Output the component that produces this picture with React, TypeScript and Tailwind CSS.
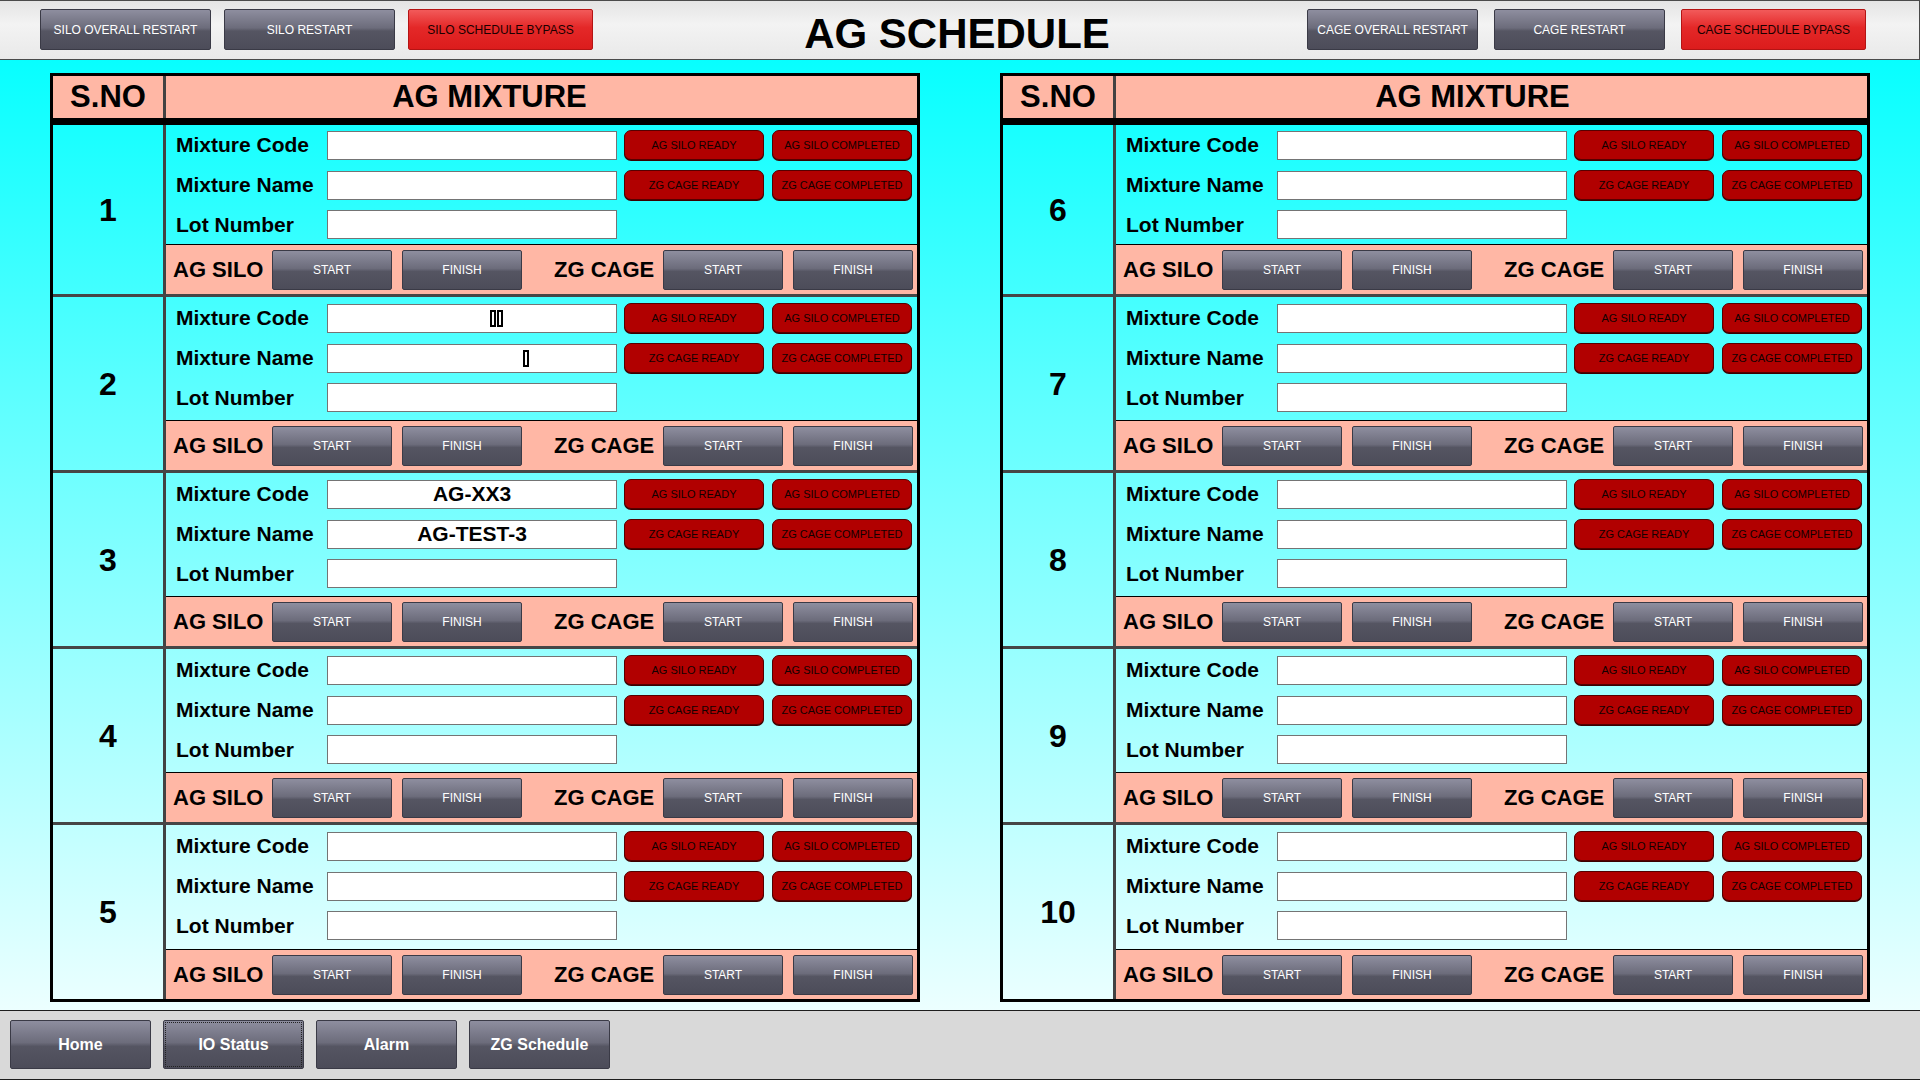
import React from 'react';

type Entry = { code?: string; name?: string; codeTofu?: number; nameTofu?: number };

const GRAY_BTN =
  'border border-[#3a3a46] bg-[linear-gradient(to_bottom,#8e8e9f_0%,#6c6c7b_46%,#555562_54%,#4c4c59_100%)] text-white';

const LEFT_ROWS: Entry[] = [{}, { codeTofu: 2, nameTofu: 1 }, { code: 'AG-XX3', name: 'AG-TEST-3' }, {}, {}];
const RIGHT_ROWS: Entry[] = [{}, {}, {}, {}, {}];

/** 글자 대신 찍히는 빈 네모 (tofu) */
function Tofu() {
  return <span className="inline-block h-[17px] w-[6px] border-2 border-black bg-white" />;
}

function TopButton({ label, red }: { label: string; red?: boolean }) {
  return (
    <div
      className={`flex h-[41px] items-center justify-center rounded-[2px] text-[12px] ${
        red
          ? 'w-[185px] border border-[#b41414] bg-[linear-gradient(to_bottom,#f25a5a_0%,#e42828_45%,#dc1c1c_100%)] text-[#1a0000]'
          : `w-[171px] ${GRAY_BTN}`
      }`}
    >
      {label}
    </div>
  );
}

function RedLamp({ label }: { label: string }) {
  return (
    <div className="flex h-[30px] w-[140px] items-center justify-center rounded-[7px] border border-[#560000] bg-[#b10000] text-[11px] text-[#120000] shadow-[0_1px_0_#3a0000]">
      {label}
    </div>
  );
}

function Field({ text, tofu, tofuPad }: { text?: string; tofu?: number; tofuPad?: string }) {
  return (
    <div
      className={`flex h-[29px] w-[290px] items-center border border-[#747474] bg-white text-[21px] font-bold text-black ${
        tofu ? tofuPad : 'justify-center'
      }`}
    >
      {text}
      {tofu ? (
        <span className="flex gap-[1px]">
          {Array.from({ length: tofu }).map((_, i) => (
            <Tofu key={i} />
          ))}
        </span>
      ) : null}
    </div>
  );
}

function SmallGray({ label }: { label: string }) {
  return (
    <div className={`flex h-[40px] w-[120px] items-center justify-center rounded-[2px] text-[12px] ${GRAY_BTN}`}>
      {label}
    </div>
  );
}

function Row({ n, entry, index }: { n: number; entry: Entry; index: number }) {
  const first = index === 0;
  const size = first ? 'h-[169px]' : index === 4 ? 'flex-1 border-t-[3px] border-[#464646]' : 'h-[176px] border-t-[3px] border-[#464646]';
  return (
    <div className={`flex ${size}`}>
      <div className="flex w-[113px] items-center justify-center border-r-[3px] border-[#424242] text-[32px] font-bold">
        {n}
      </div>
      <div className="flex flex-1 flex-col">
        <div className={`flex flex-1 flex-col gap-[10px] pl-[10px] ${first ? 'pt-[5px]' : 'pt-[6px]'}`}>
          <div className="flex h-[30px] items-center">
            <span className="w-[151px] text-[21px] font-bold">Mixture Code</span>
            <Field text={entry.code} tofu={entry.codeTofu} tofuPad="pl-[162px]" />
            <div className="ml-[7px] flex gap-[8px]">
              <RedLamp label="AG SILO READY" />
              <RedLamp label="AG SILO COMPLETED" />
            </div>
          </div>
          <div className="flex h-[30px] items-center">
            <span className="w-[151px] text-[21px] font-bold">Mixture Name</span>
            <Field text={entry.name} tofu={entry.nameTofu} tofuPad="pl-[195px]" />
            <div className="ml-[7px] flex gap-[8px]">
              <RedLamp label="ZG CAGE READY" />
              <RedLamp label="ZG CAGE COMPLETED" />
            </div>
          </div>
          <div className="flex h-[29px] items-center">
            <span className="w-[151px] text-[21px] font-bold">Lot Number</span>
            <Field />
          </div>
        </div>
        <div className="flex h-[50px] items-center border-t border-black bg-[#ffb7a5] pl-[7px]">
          <span className="w-[99px] text-[22px] font-bold">AG SILO</span>
          <SmallGray label="START" />
          <div className="ml-[10px]">
            <SmallGray label="FINISH" />
          </div>
          <span className="ml-[32px] w-[109px] text-[22px] font-bold">ZG CAGE</span>
          <SmallGray label="START" />
          <div className="ml-[10px]">
            <SmallGray label="FINISH" />
          </div>
        </div>
      </div>
    </div>
  );
}

function ScheduleTable({ start, rows, titlePad }: { start: number; rows: Entry[]; titlePad: string }) {
  return (
    <div className="flex h-[929px] w-[870px] flex-col border-[3px] border-black">
      <div className="flex h-[49px] border-b-[7px] border-black bg-[#ffb7a5]">
        <div className="flex w-[113px] items-center justify-center border-r-[3px] border-[#424242] text-[31px] font-bold">
          S.NO
        </div>
        <div className={`flex flex-1 items-center justify-center text-[31px] font-bold ${titlePad}`}>AG MIXTURE</div>
      </div>
      {rows.map((r, i) => (
        <Row key={i} n={start + i} entry={r} index={i} />
      ))}
    </div>
  );
}

export default function App() {
  return (
    <div className="flex h-[1080px] w-[1920px] flex-col overflow-hidden font-['Liberation_Sans',Arial,sans-serif] text-black">
      {/* 상단 바 */}
      <div className="flex h-[60px] items-start border-y border-r border-[#4a4a4a] bg-[linear-gradient(to_bottom,#e4e4e4,#f3f3f3_40%,#e9e9e9)] pt-[8px]">
        <div className="flex gap-[13px] pl-[40px]">
          <TopButton label="SILO OVERALL RESTART" />
          <TopButton label="SILO RESTART" />
          <TopButton label="SILO SCHEDULE BYPASS" red />
        </div>
        <div className="mt-[4px] flex flex-1 justify-center pl-[14px] text-[42px] font-bold leading-none">
          AG SCHEDULE
        </div>
        <div className="flex gap-[16px] pr-[53px]">
          <TopButton label="CAGE OVERALL RESTART" />
          <TopButton label="CAGE RESTART" />
          <TopButton label="CAGE SCHEDULE BYPASS" red />
        </div>
      </div>

      {/* 본문 */}
      <div className="flex h-[950px] gap-[80px] bg-[linear-gradient(to_bottom,#07ffff_0%,#5cffff_35%,#b4ffff_75%,#ecffff_100%)] pl-[50px] pt-[13px]">
        <ScheduleTable start={1} rows={LEFT_ROWS} titlePad="pr-[104px]" />
        <ScheduleTable start={6} rows={RIGHT_ROWS} titlePad="pr-[38px]" />
      </div>

      {/* 하단 네비게이션 */}
      <div className="flex h-[70px] gap-[12px] border-y border-[#1e1e1e] bg-[#d9d9d9] pl-[10px] pt-[9px]">
        {['Home', 'IO Status', 'Alarm', 'ZG Schedule'].map((l) => (
          <div
            key={l}
            className={`flex h-[49px] w-[141px] items-center justify-center rounded-[2px] text-[16px] font-bold ${GRAY_BTN} ${
              l === 'IO Status' ? 'outline-1 -outline-offset-3 outline-dotted outline-[#222]' : ''
            }`}
          >
            {l}
          </div>
        ))}
      </div>
    </div>
  );
}
